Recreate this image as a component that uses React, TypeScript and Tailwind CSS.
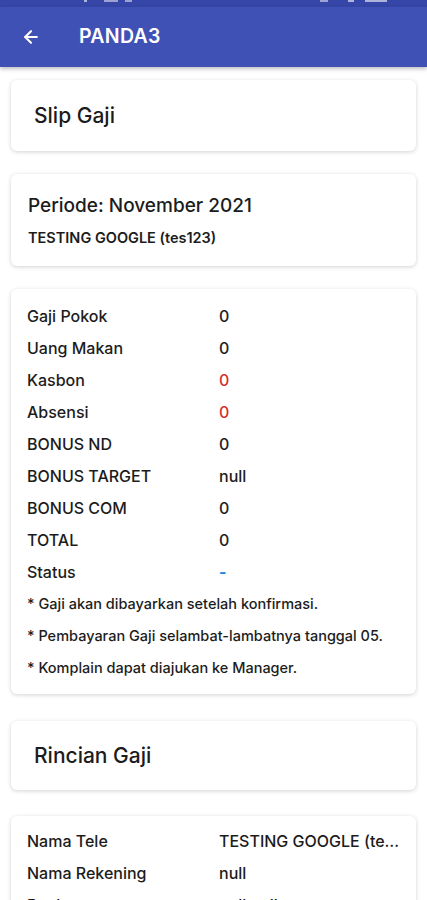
import { ArrowLeft } from "lucide-react";

const font = { fontFamily: "Inter, 'Noto Sans', sans-serif" };

interface Row {
  label: string;
  value: string;
  tone?: "red" | "blue";
}

const slipRows: Row[] = [
  { label: "Gaji Pokok", value: "0" },
  { label: "Uang Makan", value: "0" },
  { label: "Kasbon", value: "0", tone: "red" },
  { label: "Absensi", value: "0", tone: "red" },
  { label: "BONUS ND", value: "0" },
  { label: "BONUS TARGET", value: "null" },
  { label: "BONUS COM", value: "0" },
  { label: "TOTAL", value: "0" },
  { label: "Status", value: "-", tone: "blue" },
];

const notes = [
  "* Gaji akan dibayarkan setelah konfirmasi.",
  "* Pembayaran Gaji selambat-lambatnya tanggal 05.",
  "* Komplain dapat diajukan ke Manager.",
];

const rincianRows: Row[] = [
  { label: "Nama Tele", value: "TESTING GOOGLE (tes123)" },
  { label: "Nama Rekening", value: "null" },
  { label: "Bank", value: "null null" },
];

function Card({ className = "", children }: { className?: string; children: React.ReactNode }) {
  return (
    <div className={`mx-[11px] rounded-md bg-white shadow-[0_1px_4px_rgba(0,0,0,0.18)] ${className}`}>
      {children}
    </div>
  );
}

function DataRow({ row }: { row: Row }) {
  const color =
    row.tone === "red"
      ? "text-[#d32f2f]"
      : row.tone === "blue"
        ? "text-[#1e88e5] font-bold"
        : "text-[#1c1c1c]";
  return (
    <div className="flex h-8 items-center text-[16px] font-medium">
      <span className="w-[192px] shrink-0 text-[#1c1c1c]">{row.label}</span>
      <span className={`min-w-0 flex-1 truncate ${color}`}>{row.value}</span>
    </div>
  );
}

export default function App() {
  return (
    <div className="h-[900px] overflow-hidden bg-white" style={font}>
      {/* status bar, mostly cut off */}
      <div className="relative h-[7px] bg-[#3546a8]">
        <span className="absolute left-[84px] top-0 h-[2px] w-[3px] bg-white/60" />
        <span className="absolute left-[104px] top-0 h-[2px] w-[14px] bg-white/50" />
        <span className="absolute left-[125px] top-0 h-[2px] w-[7px] bg-white/50" />
        <span className="absolute left-[320px] top-0 h-[2px] w-[8px] bg-white/50" />
        <span className="absolute left-[348px] top-0 h-[2px] w-[6px] bg-white/60" />
        <span className="absolute left-[365px] top-0 h-[2px] w-[22px] bg-white/60" />
      </div>
      {/* app bar */}
      <div className="relative z-10 flex h-[60px] items-center bg-[#3f51b5] shadow-[0_2px_4px_rgba(0,0,0,0.25)]">
        <ArrowLeft className="ml-[21px] h-[20px] w-[20px] text-white" strokeWidth={2.5} />
        <span className="ml-[38px] text-[19.5px] font-semibold tracking-[0.3px] text-white">PANDA3</span>
      </div>

      <div className="pt-[13px]">
        <Card className="flex h-[71px] items-center px-[23px]">
          <span className="text-[21px] font-medium text-[#1c1c1c]">Slip Gaji</span>
        </Card>

        <Card className="mt-[23px] flex h-[92px] flex-col justify-center px-[17px]">
          <span className="text-[19px] font-medium leading-[22px] text-[#1c1c1c]">Periode: November 2021</span>
          <span className="mt-[12px] text-[14.5px] font-semibold leading-[17px] text-[#1c1c1c]">TESTING GOOGLE (tes123)</span>
        </Card>

        <Card className="mt-[23px] px-[16px] pb-[10px] pt-[11px]">
          {slipRows.map((r) => (
            <DataRow key={r.label} row={r} />
          ))}
          {notes.map((n) => (
            <div key={n} className="flex h-8 items-center text-[14.5px] font-medium text-[#1c1c1c]">
              {n}
            </div>
          ))}
        </Card>

        <Card className="mt-[27px] flex h-[69px] items-center px-[23px]">
          <span className="text-[21px] font-medium text-[#1c1c1c]">Rincian Gaji</span>
        </Card>

        <Card className="mt-[26px] px-[16px] pb-[10px] pt-[9px]">
          {rincianRows.map((r) => (
            <DataRow key={r.label} row={r} />
          ))}
        </Card>
      </div>
    </div>
  );
}
